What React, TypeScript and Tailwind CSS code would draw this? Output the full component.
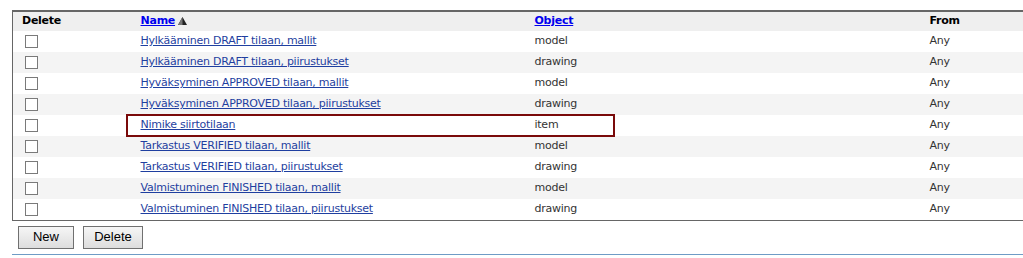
import React from "react";

type Rule = { name: string; object: string; from: string };

const rules: Rule[] = [
  { name: "Hylkääminen DRAFT tilaan, mallit", object: "model", from: "Any" },
  { name: "Hylkääminen DRAFT tilaan, piirustukset", object: "drawing", from: "Any" },
  { name: "Hyväksyminen APPROVED tilaan, mallit", object: "model", from: "Any" },
  { name: "Hyväksyminen APPROVED tilaan, piirustukset", object: "drawing", from: "Any" },
  { name: "Nimike siirtotilaan", object: "item", from: "Any" },
  { name: "Tarkastus VERIFIED tilaan, mallit", object: "model", from: "Any" },
  { name: "Tarkastus VERIFIED tilaan, piirustukset", object: "drawing", from: "Any" },
  { name: "Valmistuminen FINISHED tilaan, mallit", object: "model", from: "Any" },
  { name: "Valmistuminen FINISHED tilaan, piirustukset", object: "drawing", from: "Any" },
];

function SortArrow() {
  return (
    <svg width="9" height="8" viewBox="0 0 9 8" className="inline-block ml-[3px] align-[-1px]">
      <polygon points="4.5,0 9,8 0,8" fill="#222" />
      <polygon points="4.5,0 4.5,8 0,8" fill="#777" />
    </svg>
  );
}

function Checkbox() {
  return <span className="block w-[13px] h-[13px] border border-[#7a7a7a] bg-white ml-[1px]" />;
}

export default function App() {
  return (
    <div
      className="relative w-[1023px] h-[258px] overflow-hidden bg-white"
      style={{ fontFamily: '"DejaVu Sans", Verdana, sans-serif' }}
    >
      <div className="pt-[10px] pl-[12px]">
        <table className="table-fixed w-[1060px] border-collapse border-t-2 border-l border-b border-[#666] text-[11px] tracking-[-0.25px]">
          <colgroup>
            <col className="w-[118px]" />
            <col className="w-[394px]" />
            <col className="w-[395px]" />
            <col />
          </colgroup>
          <thead>
            <tr className="h-[20px] bg-[#efefef] text-left">
              <th className="pl-[9px] font-bold text-black">Delete</th>
              <th className="pl-[10px] font-bold">
                <a className="text-[#0000ee] underline">Name</a>
                <SortArrow />
              </th>
              <th className="pl-[10px] font-bold">
                <a className="text-[#0000ee] underline">Object</a>
              </th>
              <th className="pl-[10px] font-bold text-black">From</th>
            </tr>
          </thead>
          <tbody>
            {rules.map((r, i) => (
              <tr key={r.name} className={`h-[21px] ${i % 2 === 1 ? "bg-[#f4f4f4]" : "bg-white"}`}>
                <td className="pl-[11px]">
                  <Checkbox />
                </td>
                <td className="pl-[10px]">
                  <a className="text-[#1f3fa0] underline">{r.name}</a>
                </td>
                <td className="pl-[10px] text-[#333]">{r.object}</td>
                <td className="pl-[10px] text-[#333]">{r.from}</td>
              </tr>
            ))}
          </tbody>
        </table>
      </div>

      <div className="flex gap-[9px] pl-[18px] pt-[5px]" style={{ fontFamily: '"Liberation Sans", Arial, sans-serif' }}>
        <button className="w-[56px] h-[23px] border border-[#707070] bg-gradient-to-b from-[#f6f6f6] to-[#dddddd] text-[13px] text-black">
          New
        </button>
        <button className="w-[60px] h-[23px] border border-[#707070] bg-gradient-to-b from-[#f6f6f6] to-[#dddddd] text-[13px] text-black">
          Delete
        </button>
      </div>

      <div className="ml-[12px] mt-[5px] h-px bg-[#6f9cc6]" />

      {/* outline around the selected rule */}
      <div className="absolute left-[126px] top-[114px] w-[489px] h-[23px] border-2 border-[#7a0a0a] pointer-events-none" />
    </div>
  );
}
